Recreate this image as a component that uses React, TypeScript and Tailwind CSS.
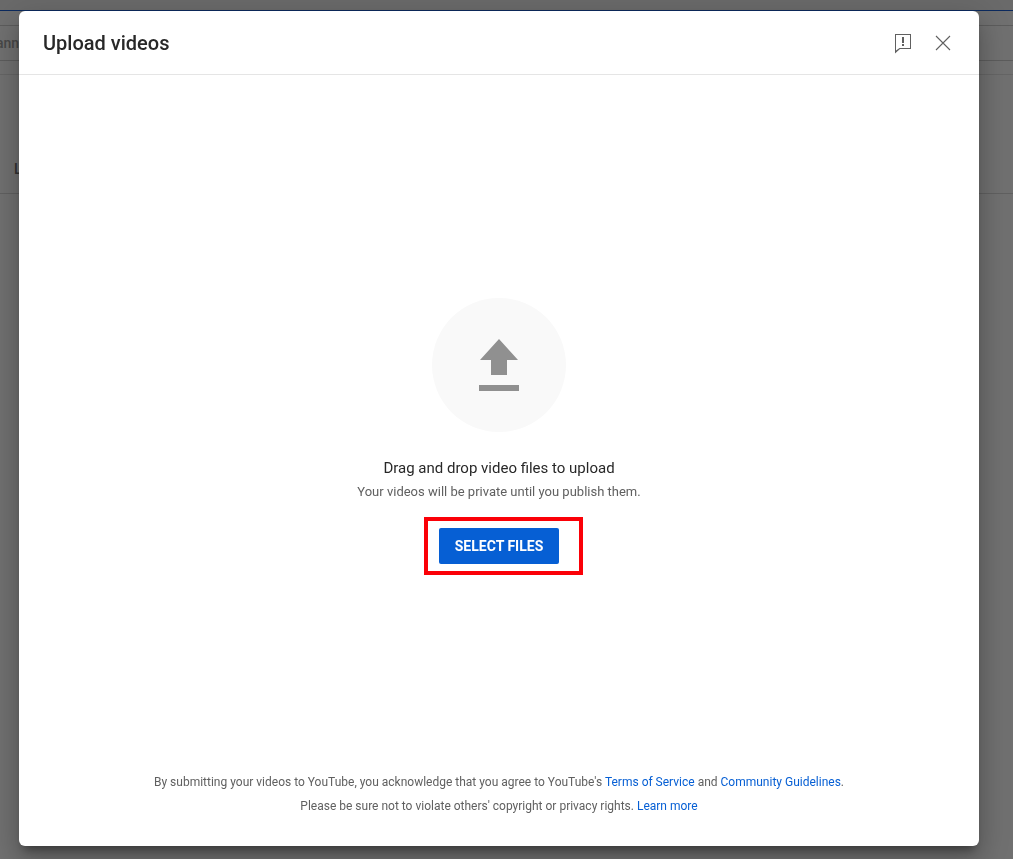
import React from 'react';

interface LegalLinkProps {
  href: string;
  children: React.ReactNode;
}

const LegalLink: React.FC<LegalLinkProps> = ({ href, children }) => (
  <a href={href} className="text-[#065fd4]">{children}</a>
);

const FeedbackIcon = () => (
  <svg width="24" height="24" viewBox="0 0 24 24" fill="#606060" aria-hidden="true">
    <path d="M4 3h16v15H9l-5 4.500V3zm1 1v15.500L8.500 17H19V4H5z" />
    <path d="M11 6h2v6h-2zM11 13h2v2h-2z" />
  </svg>
);

const CloseIcon = () => (
  <svg width="24" height="24" viewBox="0 0 24 24" fill="none" stroke="#606060" strokeWidth="1.1" aria-hidden="true">
    <path d="M5 5l14 14M19 5L5 19" />
  </svg>
);

const UploadIcon = () => (
  <svg width="136" height="136" viewBox="0 0 136 136" aria-hidden="true">
    <circle cx="68" cy="68" r="67" fill="#f9f9f9" />
    <path d="M68 42l19 21H76v15H60V63H49z" fill="#909090" />
    <rect x="48" y="88" width="40" height="6" fill="#909090" />
  </svg>
);

// Dimmed studio page that shows around the dialog
const StudioPage = () => (
  <div className="min-h-screen bg-[#707070] text-[#303030]" aria-hidden="true">
    <div className="h-[11px] border-b border-[#0c2a5e] bg-[#6a6a6a]" />
    <div className="h-[15px] border-b border-[#5c5c5c]" />
    <div className="flex h-[35px] items-center border-b border-[#5c5c5c] text-sm font-medium text-[#484848]">
      <span className="-ml-1">ann</span>
    </div>
    <div className="h-[14px] border-b border-[#656565]" />
    <div className="h-[119px] border-b border-[#606060] pt-[84px] pl-[14px] text-sm leading-5 font-medium">L</div>
  </div>
);

const UploadDialog = () => (
  <section
    role="dialog"
    aria-labelledby="upload-title"
    className="flex flex-1 flex-col rounded-md bg-white shadow-[0_16px_24px_2px_rgba(0,0,0,0.14),0_6px_30px_5px_rgba(0,0,0,0.12),0_8px_10px_-5px_rgba(0,0,0,0.4)]"
  >
    <header className="flex h-16 items-center justify-between border-b border-[#e5e5e5] px-6">
      <h1 id="upload-title" className="text-xl font-medium text-[#282828]">Upload videos</h1>
      <div className="flex gap-4">
        <button type="button" aria-label="Send feedback"><FeedbackIcon /></button>
        <button type="button" aria-label="Close"><CloseIcon /></button>
      </div>
    </header>

    <main className="flex flex-1 flex-col items-center justify-center pt-4">
      <UploadIcon />
      <p className="mt-[23px] text-[15px] leading-6 text-[#282828]">Drag and drop video files to upload</p>
      <p className="text-[13px] leading-6 text-[#606060]">Your videos will be private until you publish them.</p>
      <div className="relative mt-6">
        <button type="button" className="block h-9 rounded-xs bg-[#065fd4] px-4 text-sm font-bold text-white">
          SELECT FILES
        </button>
        <span className="pointer-events-none absolute -top-[11px] -right-6 -bottom-[11px] -left-[15px] border-4 border-[#fb0007]" />
      </div>
    </main>

    <footer className="px-6 pb-7 text-center text-xs leading-6 text-[#606060]">
      <p>
        By submitting your videos to YouTube, you acknowledge that you agree to YouTube's{' '}
        <LegalLink href="#terms">Terms of Service</LegalLink> and{' '}
        <LegalLink href="#guidelines">Community Guidelines</LegalLink>.
      </p>
      <p>
        Please be sure not to violate others' copyright or privacy rights.{' '}
        <LegalLink href="#learn-more">Learn more</LegalLink>
      </p>
    </footer>
  </section>
);

const App: React.FC = () => {
  return (
    <div className="font-[Roboto,sans-serif]">
      <StudioPage />
      <div className="fixed inset-0 flex pt-[11px] pr-[34px] pb-[13px] pl-[19px]">
        <UploadDialog />
      </div>
    </div>
  );
};

export default App;
